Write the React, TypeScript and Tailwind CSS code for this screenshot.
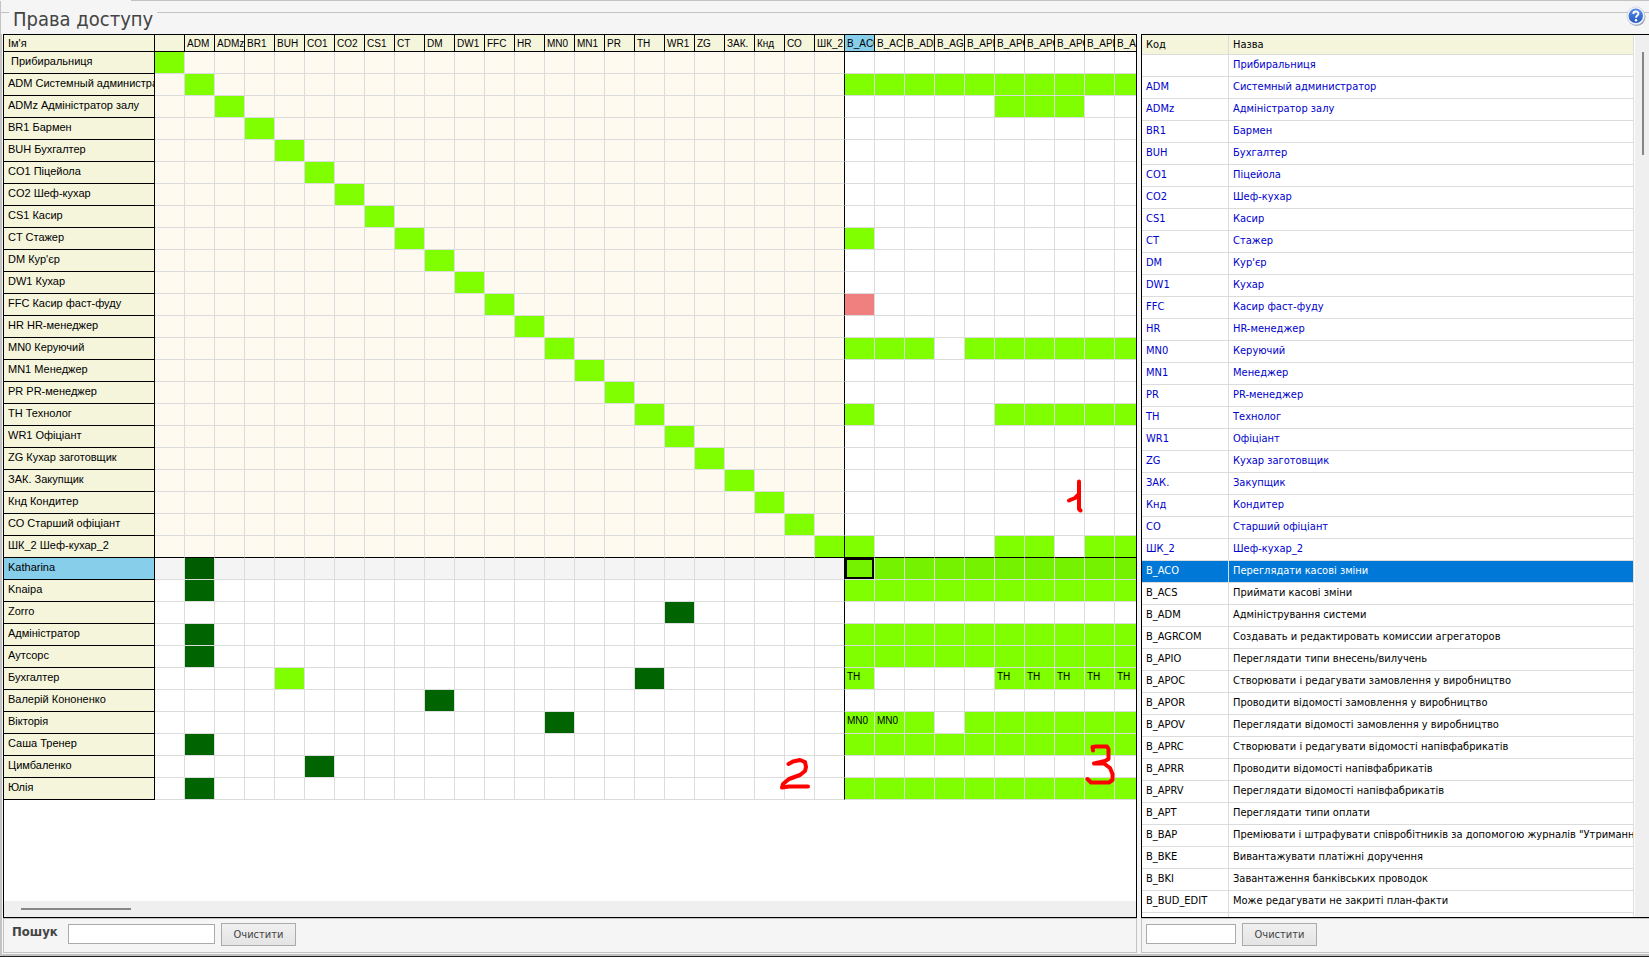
import clsx from "clsx";

type Row = {
  name: string;
  code?: string;
  roles?: Record<string, "dark" | "light">;
  grants?: number[];
  denied?: number[];
  via?: Record<number, string>;
};

const ALL = [0, 1, 2, 3, 4, 5, 6, 7, 8, 9];

const ROLES: Row[] = [
  { code: "", name: "Прибиральниця" },
  { code: "ADM", name: "Системный администратор", grants: ALL },
  { code: "ADMz", name: "Адміністратор залу", grants: [5, 6, 7] },
  { code: "BR1", name: "Бармен" },
  { code: "BUH", name: "Бухгалтер" },
  { code: "CO1", name: "Піцейола" },
  { code: "CO2", name: "Шеф-кухар" },
  { code: "CS1", name: "Касир" },
  { code: "CT", name: "Стажер", grants: [0] },
  { code: "DM", name: "Кур'єр" },
  { code: "DW1", name: "Кухар" },
  { code: "FFC", name: "Касир фаст-фуду", denied: [0] },
  { code: "HR", name: "HR-менеджер" },
  { code: "MN0", name: "Керуючий", grants: [0, 1, 2, 4, 5, 6, 7, 8, 9] },
  { code: "MN1", name: "Менеджер" },
  { code: "PR", name: "PR-менеджер" },
  { code: "TH", name: "Технолог", grants: [0, 5, 6, 7, 8, 9] },
  { code: "WR1", name: "Офіціант" },
  { code: "ZG", name: "Кухар заготовщик" },
  { code: "ЗАК.", name: "Закупщик" },
  { code: "Кнд", name: "Кондитер" },
  { code: "СО", name: "Старший офіціант" },
  { code: "ШК_2", name: "Шеф-кухар_2", grants: [0, 5, 6, 8, 9] },
];

const USERS: Row[] = [
  { name: "Katharina", roles: { ADM: "dark" }, grants: ALL },
  { name: "Knaipa", roles: { ADM: "dark" }, grants: ALL },
  { name: "Zorro", roles: { WR1: "dark" } },
  { name: "Адміністратор", roles: { ADM: "dark" }, grants: ALL },
  { name: "Аутсорс", roles: { ADM: "dark" }, grants: ALL },
  {
    name: "Бухгалтер",
    roles: { BUH: "light", TH: "dark" },
    grants: [0, 5, 6, 7, 8, 9],
    via: { 0: "TH", 5: "TH", 6: "TH", 7: "TH", 8: "TH", 9: "TH" },
  },
  { name: "Валерій Кононенко", roles: { DM: "dark" } },
  {
    name: "Вікторія",
    roles: { MN0: "dark" },
    grants: [0, 1, 2, 4, 5, 6, 7, 8, 9],
    via: { 0: "MN0", 1: "MN0" },
  },
  { name: "Саша Тренер", roles: { ADM: "dark" }, grants: ALL },
  { name: "Цимбаленко", roles: { CO1: "dark" } },
  { name: "Юлія", roles: { ADM: "dark" }, grants: ALL },
];

const PERMISSIONS = [
  ["B_ACO", "Переглядати касові зміни"],
  ["B_ACS", "Приймати касові зміни"],
  ["B_ADM", "Адміністрування системи"],
  ["B_AGRCOM", "Создавать и редактировать комиссии агрегаторов"],
  ["B_APIO", "Переглядати типи внесень/вилучень"],
  ["B_APOC", "Створювати і редагувати замовлення у виробництво"],
  ["B_APOR", "Проводити відомості замовлення у виробництво"],
  ["B_APOV", "Переглядати відомості замовлення у виробництво"],
  ["B_APRC", "Створювати і редагувати відомості напівфабрикатів"],
  ["B_APRR", "Проводити відомості напівфабрикатів"],
  ["B_APRV", "Переглядати відомості напівфабрикатів"],
  ["B_APT", "Переглядати типи оплати"],
  ["B_BAP", "Преміювати і штрафувати співробітників за допомогою журналів \"Утримання"],
  ["B_BKE", "Вивантажувати платіжні доручення"],
  ["B_BKI", "Завантаження банківських проводок"],
  ["B_BUD_EDIT", "Може редагувати не закриті план-факти"],
];

const COLUMNS = PERMISSIONS.slice(0, 10).map(([code]) => code);

const headCell =
  "h-[17px] overflow-hidden border-r border-b border-black bg-[#f5f5dc] p-0 pt-px text-left align-top leading-[15px] font-normal whitespace-nowrap";

function MatrixRow({ row, selected, lastRole }: { row: Row; selected?: boolean; lastRole?: boolean }) {
  const isRole = row.code !== undefined;
  const line = lastRole ? "border-b-black" : "border-b-[#dcdcdc]";

  return (
    <tr>
      <th
        scope="row"
        className={clsx(
          "h-[22px] overflow-hidden border-r border-b border-black p-0 pl-1 text-left align-top text-[11px] leading-[18px] font-normal whitespace-pre",
          selected ? "bg-[#87ceeb]" : "bg-[#f5f5dc]",
        )}
      >
        {isRole ? `${row.code} ${row.name}` : row.name}
      </th>
      {ROLES.map((role, i) => {
        const mark = isRole ? (role.code === row.code ? "light" : undefined) : row.roles?.[role.code!];
        return (
          <td
            key={role.code}
            className={clsx(
              "border-r border-b p-0",
              line,
              i === ROLES.length - 1 ? "border-r-black" : "border-r-[#dcdcdc]",
              mark === "light" && "bg-[#7fff00]",
              mark === "dark" && (selected ? "bg-[#005c00]" : "bg-[#006400]"),
              !mark && isRole && "bg-[#fffaf0]",
              !mark && !isRole && (selected ? "bg-[#f4f4f4]" : "bg-white"),
            )}
          />
        );
      })}
      {COLUMNS.map((code, i) => {
        const granted = row.grants?.includes(i);
        return (
          <td
            key={code}
            className={clsx(
              "overflow-hidden border-r border-b border-r-[#dcdcdc] p-0 align-top text-[10px] leading-[18px]",
              line,
              granted && (selected ? "bg-[#75f200]" : "bg-[#7fff00]"),
              row.denied?.includes(i) && "bg-[#f08080]",
            )}
          >
            {selected && i === 0 ? (
              <div className="h-[21px] border-2 border-black" />
            ) : (
              <span className="pl-0.5">{row.via?.[i]}</span>
            )}
          </td>
        );
      })}
    </tr>
  );
}

function AccessMatrix() {
  return (
    <table className="w-[1141px] table-fixed border-separate border-spacing-0 font-['Liberation_Sans',Arial,sans-serif]">
      <colgroup>
        <col className="w-[151px]" />
        {[...ROLES, ...COLUMNS].map((_, i) => (
          <col key={i} className="w-[30px]" />
        ))}
      </colgroup>
      <thead>
        <tr>
          <th className={clsx(headCell, "pl-1! text-[11px]")}>Ім'я</th>
          {ROLES.map((role) => (
            <th key={role.code} className={clsx(headCell, "pl-0.5! text-[10px]")}>
              {role.code}
            </th>
          ))}
          {COLUMNS.map((code, i) => (
            <th key={code} className={clsx(headCell, "pl-0.5! text-[10px]", i === 0 && "bg-[#87ceeb]!")}>
              {code}
            </th>
          ))}
        </tr>
      </thead>
      <tbody>
        {ROLES.map((row, i) => (
          <MatrixRow key={row.name} row={row} lastRole={i === ROLES.length - 1} />
        ))}
        {USERS.map((row, i) => (
          <MatrixRow key={row.name} row={row} selected={i === 0} />
        ))}
      </tbody>
    </table>
  );
}

// hand-drawn numbers over the three zones of the matrix
function ZoneMarks() {
  return (
    <svg
      width="1132"
      height="780"
      className="pointer-events-none absolute top-0 left-0"
      fill="none"
      stroke="#ff0000"
      strokeWidth="4"
      strokeLinecap="round"
      strokeLinejoin="round"
      aria-hidden="true"
    >
      <path d="M1065 465.500L1071 463L1075 459V446.500V474L1076.500 475.500" />
      <path d="M784.500 729L789 726.500L796 725L801 727L802 732L801 736L796 740L785 744L779 749L778 752.500L785 751.500H804" />
      <path d="M1089 715.500L1088.500 712L1092 711.500H1103L1104.500 714V724L1101 726L1090 728.500H1100L1106 733L1108.500 739V745L1105 747.500H1087L1083.500 744" />
    </svg>
  );
}

function RightsList() {
  const rows = [
    ...ROLES.map((r) => ({ code: r.code!, name: r.name, role: true })),
    ...PERMISSIONS.map(([code, name]) => ({ code, name, role: false })),
    { code: " ", name: "", role: false },
  ];
  const cell =
    "h-[22px] overflow-hidden border-r border-b border-[#dcdcdc] p-0 pl-1 text-left align-top leading-5 font-normal whitespace-nowrap";
  const head =
    "h-5 overflow-hidden border-r border-b border-[#dcdcdc] p-0 pl-1 text-left align-top leading-[19px] font-normal";

  return (
    <table className="w-full table-fixed border-separate border-spacing-0 text-[11px]">
      <colgroup>
        <col className="w-[87px]" />
        <col />
      </colgroup>
      <thead>
        <tr className="bg-[#f5f5dc]">
          <th className={head}>Код</th>
          <th className={head}>Назва</th>
        </tr>
      </thead>
      <tbody>
        {rows.map((row) => (
          <tr
            key={row.code}
            className={clsx(row.code === "B_ACO" ? "bg-[#0078d7] text-white" : row.role ? "text-[#0000cd]" : "text-black")}
          >
            <td className={cell}>{row.code}</td>
            <td className={cell}>{row.name}</td>
          </tr>
        ))}
      </tbody>
    </table>
  );
}

const inputClass = "mt-px h-5 border border-[#ababab] bg-white px-1 text-[11px] outline-none";
const buttonClass =
  "ml-1.5 h-[23px] w-[75px] border border-[#ababab] bg-linear-to-b from-[#f0f0f0] to-[#e4e4e4] pt-px text-[11px] text-[#444]";

export default function App() {
  return (
    <main className="flex h-screen flex-col overflow-hidden border-b border-[#222] bg-[#f5f5f5] font-['DejaVu_Sans_Condensed','Noto_Sans',sans-serif] text-black">
      <div className="ml-[131px] h-px shrink-0 bg-[#c3c3c3]" />
      <header className="relative flex h-[33px] shrink-0 items-start border-l border-[#c3c3c3]">
        <div className="mt-[11px] h-px w-2 bg-[#c3c3c3]" />
        <h1 className="px-1 pt-1 text-[20px] leading-7 text-[#444]">Права доступу</h1>
        <div className="mt-[11px] h-px flex-1 bg-[#c3c3c3]" />
        <button type="button" aria-label="Довідка" className="absolute top-[5px] right-[3px] size-5">
          <svg viewBox="0 0 20 20" className="size-5">
            <defs>
              <linearGradient id="help" x1="0" y1="0" x2="0" y2="1">
                <stop offset="0" stopColor="#5d8ee6" />
                <stop offset="1" stopColor="#2456c0" />
              </linearGradient>
            </defs>
            <circle cx="10.500" cy="10.800" r="9" fill="#8b95a8" />
            <circle cx="9.800" cy="9.800" r="9" fill="#eef2fa" stroke="#c4cede" strokeWidth=".6" />
            <circle cx="9.800" cy="9.800" r="7.200" fill="url(#help)" />
            <path d="M7.300 7.900C7.300 4.600 12.600 4.700 12.400 7.700C12.300 9.400 10 9.600 10 11.700" fill="none" stroke="#fff" strokeWidth="1.900" />
            <circle cx="10" cy="14.200" r="1.200" fill="#fff" />
          </svg>
        </button>
      </header>

      <div className="flex min-h-0 flex-1 gap-1 border-b-2 border-l-2 border-[#c3c3c3] pb-px pl-px">
        <section aria-label="Матриця прав" className="flex min-w-0 flex-1 flex-col">
          <div className="flex min-h-0 flex-1 flex-col border border-black bg-white">
            <div className="relative min-h-0 flex-1 overflow-hidden">
              <AccessMatrix />
              <ZoneMarks />
            </div>
            <div className="h-4 shrink-0 bg-[#efefef] pt-[7px] pl-[17px]">
              <div className="h-0.5 w-[110px] bg-[#868686]" />
            </div>
          </div>
          <div className="flex h-[35px] shrink-0 items-start border border-[#c3c3c3] pt-1 pl-2">
            <label htmlFor="matrix-search" className="w-14 text-[13px] leading-[18px] font-bold text-[#444]">
              Пошук
            </label>
            <input id="matrix-search" type="text" className={clsx(inputClass, "w-[147px]")} />
            <button type="button" className={buttonClass}>
              Очистити
            </button>
          </div>
        </section>

        <section aria-label="Перелік прав" className="flex w-[508px] shrink-0 flex-col">
          <div className="flex min-h-0 flex-1 border-y border-l border-black bg-white">
            <div className="min-w-0 flex-1 overflow-hidden">
              <RightsList />
            </div>
            <div className="w-[15px] shrink-0 border-l border-white bg-[#efefef] pt-[17px] pl-[7px]">
              <div className="h-[103px] w-0.5 bg-[#868686]" />
            </div>
          </div>
          <div className="flex h-[35px] shrink-0 items-start border-y border-l border-[#c3c3c3] pt-1 pl-1">
            <input type="text" aria-label="Пошук права" className={clsx(inputClass, "w-[90px]")} />
            <button type="button" className={buttonClass}>
              Очистити
            </button>
          </div>
        </section>
      </div>
    </main>
  );
}
